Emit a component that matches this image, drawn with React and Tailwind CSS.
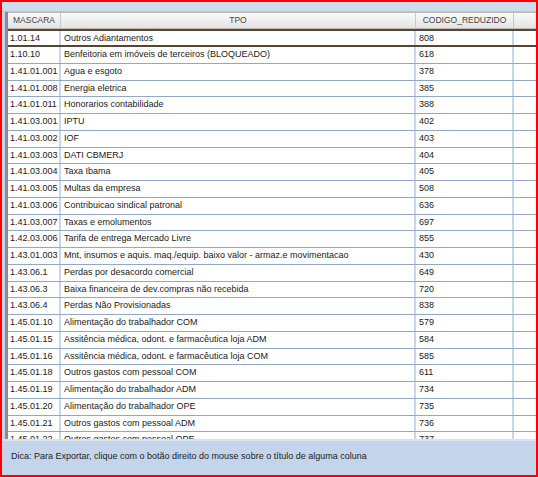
const rows = [
  ['1.01.14', 'Outros Adiantamentos', '808'],
  ['1.10.10', 'Benfeitoria em imóveis de terceiros (BLOQUEADO)', '618'],
  ['1.41.01.001', 'Agua e esgoto', '378'],
  ['1.41.01.008', 'Energia eletrica', '385'],
  ['1.41.01.011', 'Honorarios contabilidade', '388'],
  ['1.41.03.001', 'IPTU', '402'],
  ['1.41.03.002', 'IOF', '403'],
  ['1.41.03.003', 'DATI CBMERJ', '404'],
  ['1.41.03.004', 'Taxa Ibama', '405'],
  ['1.41.03.005', 'Multas da empresa', '508'],
  ['1.41.03.006', 'Contribuicao sindical patronal', '636'],
  ['1.41.03.007', 'Taxas e emolumentos', '697'],
  ['1.42.03.006', 'Tarifa de entrega Mercado Livre', '855'],
  ['1.43.01.003', 'Mnt, insumos e aquis. maq./equip. baixo valor - armaz.e movimentacao', '430'],
  ['1.43.06.1', 'Perdas por desacordo comercial', '649'],
  ['1.43.06.3', 'Baixa financeira de dev.compras não recebida', '720'],
  ['1.43.06.4', 'Perdas Não Provisionadas', '838'],
  ['1.45.01.10', 'Alimentação do trabalhador COM', '579'],
  ['1.45.01.15', 'Assitência médica, odont. e farmacêutica loja ADM', '584'],
  ['1.45.01.16', 'Assitência médica, odont. e farmacêutica loja COM', '585'],
  ['1.45.01.18', 'Outros gastos com pessoal COM', '611'],
  ['1.45.01.19', 'Alimentação do trabalhador ADM', '734'],
  ['1.45.01.20', 'Alimentação do trabalhador OPE', '735'],
  ['1.45.01.21', 'Outros gastos com pessoal ADM', '736'],
  ['1.45.01.22', 'Outros gastos com pessoal OPE', '737'],
];

const font = { fontFamily: '"Liberation Sans", Arial, sans-serif' };

const App = () => {
  return (
    <div
      className="w-[538px] h-[477px] border-2 border-[#ff0000] bg-[#c4d5eb] flex flex-col overflow-hidden text-[#1a1a1a]"
      style={font}
    >
      <div className="h-[10px] shrink-0 border-b border-[#b4c6dc] bg-[#cfdcee]" />
      <div className="flex-1 min-h-0 overflow-hidden pl-[3px]">
        <div className="h-full overflow-hidden border-l-[3px] border-[#8c8c8c] bg-white w-[600px]">
          <div className="flex h-[17px] border-y border-[#b9b9b9] bg-gradient-to-b from-[#fafafa] to-[#e3e3e3] text-[8.5px] text-[#444] leading-[15px]">
            <div className="w-[53px] shrink-0 border-r border-[#c9c9c9] text-center">MASCARA</div>
            <div className="w-[355px] shrink-0 border-r border-[#c9c9c9] text-center">TPO</div>
            <div className="w-[98px] shrink-0 border-r border-[#c9c9c9] text-center">CODIGO_REDUZIDO</div>
            <div className="flex-1" />
          </div>
          {rows.map((r, i) => (
            <div
              key={r[0]}
              className={
                i === 0
                  ? 'flex h-[18px] border-y-2 border-[#574631] text-[9px] leading-[14px]'
                  : 'flex h-[16.75px] border-b border-[#93a9c3] text-[9px] leading-[15px]'
              }
            >
              <div className="w-[53px] shrink-0 border-r-2 border-[#c6d7ec] pl-[2px] whitespace-nowrap overflow-hidden">{r[0]}</div>
              <div className="w-[355px] shrink-0 border-r-2 border-[#c6d7ec] pl-[3px] whitespace-nowrap overflow-hidden">{r[1]}</div>
              <div className="w-[98px] shrink-0 border-r-2 border-[#c6d7ec] pl-[3px]">{r[2]}</div>
              <div className="flex-1" />
            </div>
          ))}
        </div>
      </div>
      <div className="h-[36px] shrink-0 border-t-2 border-[#d8e3f1] pl-[9px] pt-[9px] text-[9px] text-[#222]">
        Dica: Para Exportar, clique com o botão direito do mouse sobre o título de alguma coluna
      </div>
    </div>
  );
};

export default App;
